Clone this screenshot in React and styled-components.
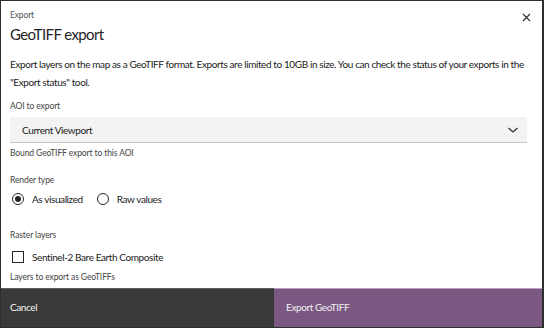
import React from 'react'
import styled, { createGlobalStyle } from 'styled-components'

const GlobalStyle = createGlobalStyle`
    html, body {
        margin: 0;
        padding: 0;
        background: #ffffff;
    }
    * { box-sizing: border-box; }
`

const Dialog = styled.div`
    width: 544px;
    height: 328px;
    display: flex;
    flex-direction: column;
    border: 1px solid #2e2e2e;
    border-right-width: 2px;
    background: #ffffff;
    font-family: Lato, "Open Sans", sans-serif;
    color: #222;
    overflow: hidden;
`

const Header = styled.div`
    display: flex;
    justify-content: space-between;
    padding: 8px 8px 0 9px;
`

const Eyebrow = styled.div`
    font-size: 8.5px;
    letter-spacing: -0.15px;
    color: #555;
    line-height: 12px;
`

const Title = styled.h1`
    margin: 3px 0 0;
    font-size: 15px;
    letter-spacing: -0.6px;
    font-weight: 400;
    line-height: 20px;
    color: #1f1f1f;
`

const CloseButton = styled.button`
    border: 0;
    background: none;
    padding: 0;
    width: 16px;
    height: 16px;
    display: flex;
    align-items: center;
    justify-content: center;
`

const Body = styled.div`
    flex: 1;
    padding: 0 15px 0 9px;
    display: flex;
    flex-direction: column;
`

const Description = styled.p`
    margin: 11px -8px 0 0;
    font-size: 10px;
    letter-spacing: -0.4px;
    line-height: 18px;
    color: #222;
`

const Field = styled.div`
    margin-top: ${props => props.gap}px;
    display: flex;
    flex-direction: column;
`

const Label = styled.div`
    font-size: 8.5px;
    letter-spacing: -0.1px;
    line-height: 12px;
    color: #444;
`

const Helper = styled(Label)`
    margin-top: ${props => props.gap || 4}px;
`

const Select = styled.div`
    margin-top: 5px;
    height: 26px;
    background: #f3f3f3;
    border-bottom: 1px solid #c6c6c6;
    display: flex;
    align-items: center;
    justify-content: space-between;
    padding: 0 8px 0 12px;
    font-size: 10px;
    letter-spacing: -0.4px;
    color: #222;
`

const OptionRow = styled.div`
    margin-top: ${props => props.gap}px;
    display: flex;
    align-items: center;
    gap: 12px;
`

const Option = styled.label`
    display: flex;
    align-items: center;
    gap: 8px;
    font-size: 10px;
    letter-spacing: -0.4px;
    color: #222;
`

const Radio = styled.span`
    width: 12px;
    height: 12px;
    border-radius: 50%;
    border: 1px solid #262626;
    display: flex;
    align-items: center;
    justify-content: center;
    margin-left: 2px;
    &::after {
        content: "";
        width: 6px;
        height: 6px;
        border-radius: 50%;
        background: ${props => props.checked ? '#262626' : 'transparent'};
    }
`

const Checkbox = styled.span`
    width: 12px;
    height: 12px;
    border: 1px solid #262626;
    margin-left: 2px;
`

const Footer = styled.div`
    height: 39px;
    margin-top: auto;
    display: grid;
    grid-template-columns: 273px 1fr;
`

const FooterButton = styled.button`
    border: 0;
    margin: 0;
    text-align: left;
    padding: 0 0 2px ${props => props.primary ? 12 : 9}px;
    font-family: inherit;
    font-size: 10px;
    letter-spacing: -0.4px;
    color: #f4f4f4;
    background: ${props => props.primary ? '#7a5882' : '#393939'};
    border-top: 1px solid ${props => props.primary ? '#b8a2bd' : '#5a5a5a'};
`

export default function App() {
    return (
        <>
            <GlobalStyle />
            <Dialog>
                <Header>
                    <div>
                        <Eyebrow>Export</Eyebrow>
                        <Title>GeoTIFF export</Title>
                    </div>
                    <CloseButton aria-label="Close">
                        <svg width="9" height="9" viewBox="0 0 9 9">
                            <path d="M1 1 L8 8 M8 1 L1 8" stroke="#333" strokeWidth="1.2" />
                        </svg>
                    </CloseButton>
                </Header>

                <Body>
                    <Description>
                        Export layers on the map as a GeoTIFF format. Exports are limited to 10GB in size. You can check the status of your exports in the "Export status" tool.
                    </Description>

                    <Field gap={9}>
                        <Label>AOI to export</Label>
                        <Select>
                            <span>Current Viewport</span>
                            <svg width="12" height="8" viewBox="0 0 12 8">
                                <path d="M1.5 2 L6 6 L10.5 2" fill="none" stroke="#333" strokeWidth="1.3" />
                            </svg>
                        </Select>
                        <Helper gap={4}>Bound GeoTIFF export to this AOI</Helper>
                    </Field>

                    <Field gap={15}>
                        <Label>Render type</Label>
                        <OptionRow gap={7}>
                            <Option><Radio checked />As visualized</Option>
                            <Option><Radio />Raw values</Option>
                        </OptionRow>
                    </Field>

                    <Field gap={24}>
                        <Label>Raster layers</Label>
                        <OptionRow gap={10}>
                            <Option><Checkbox />Sentinel-2 Bare Earth Composite</Option>
                        </OptionRow>
                        <Helper gap={8}>Layers to export as GeoTIFFs</Helper>
                    </Field>
                </Body>

                <Footer>
                    <FooterButton>Cancel</FooterButton>
                    <FooterButton primary>Export GeoTIFF</FooterButton>
                </Footer>
            </Dialog>
        </>
    )
}
